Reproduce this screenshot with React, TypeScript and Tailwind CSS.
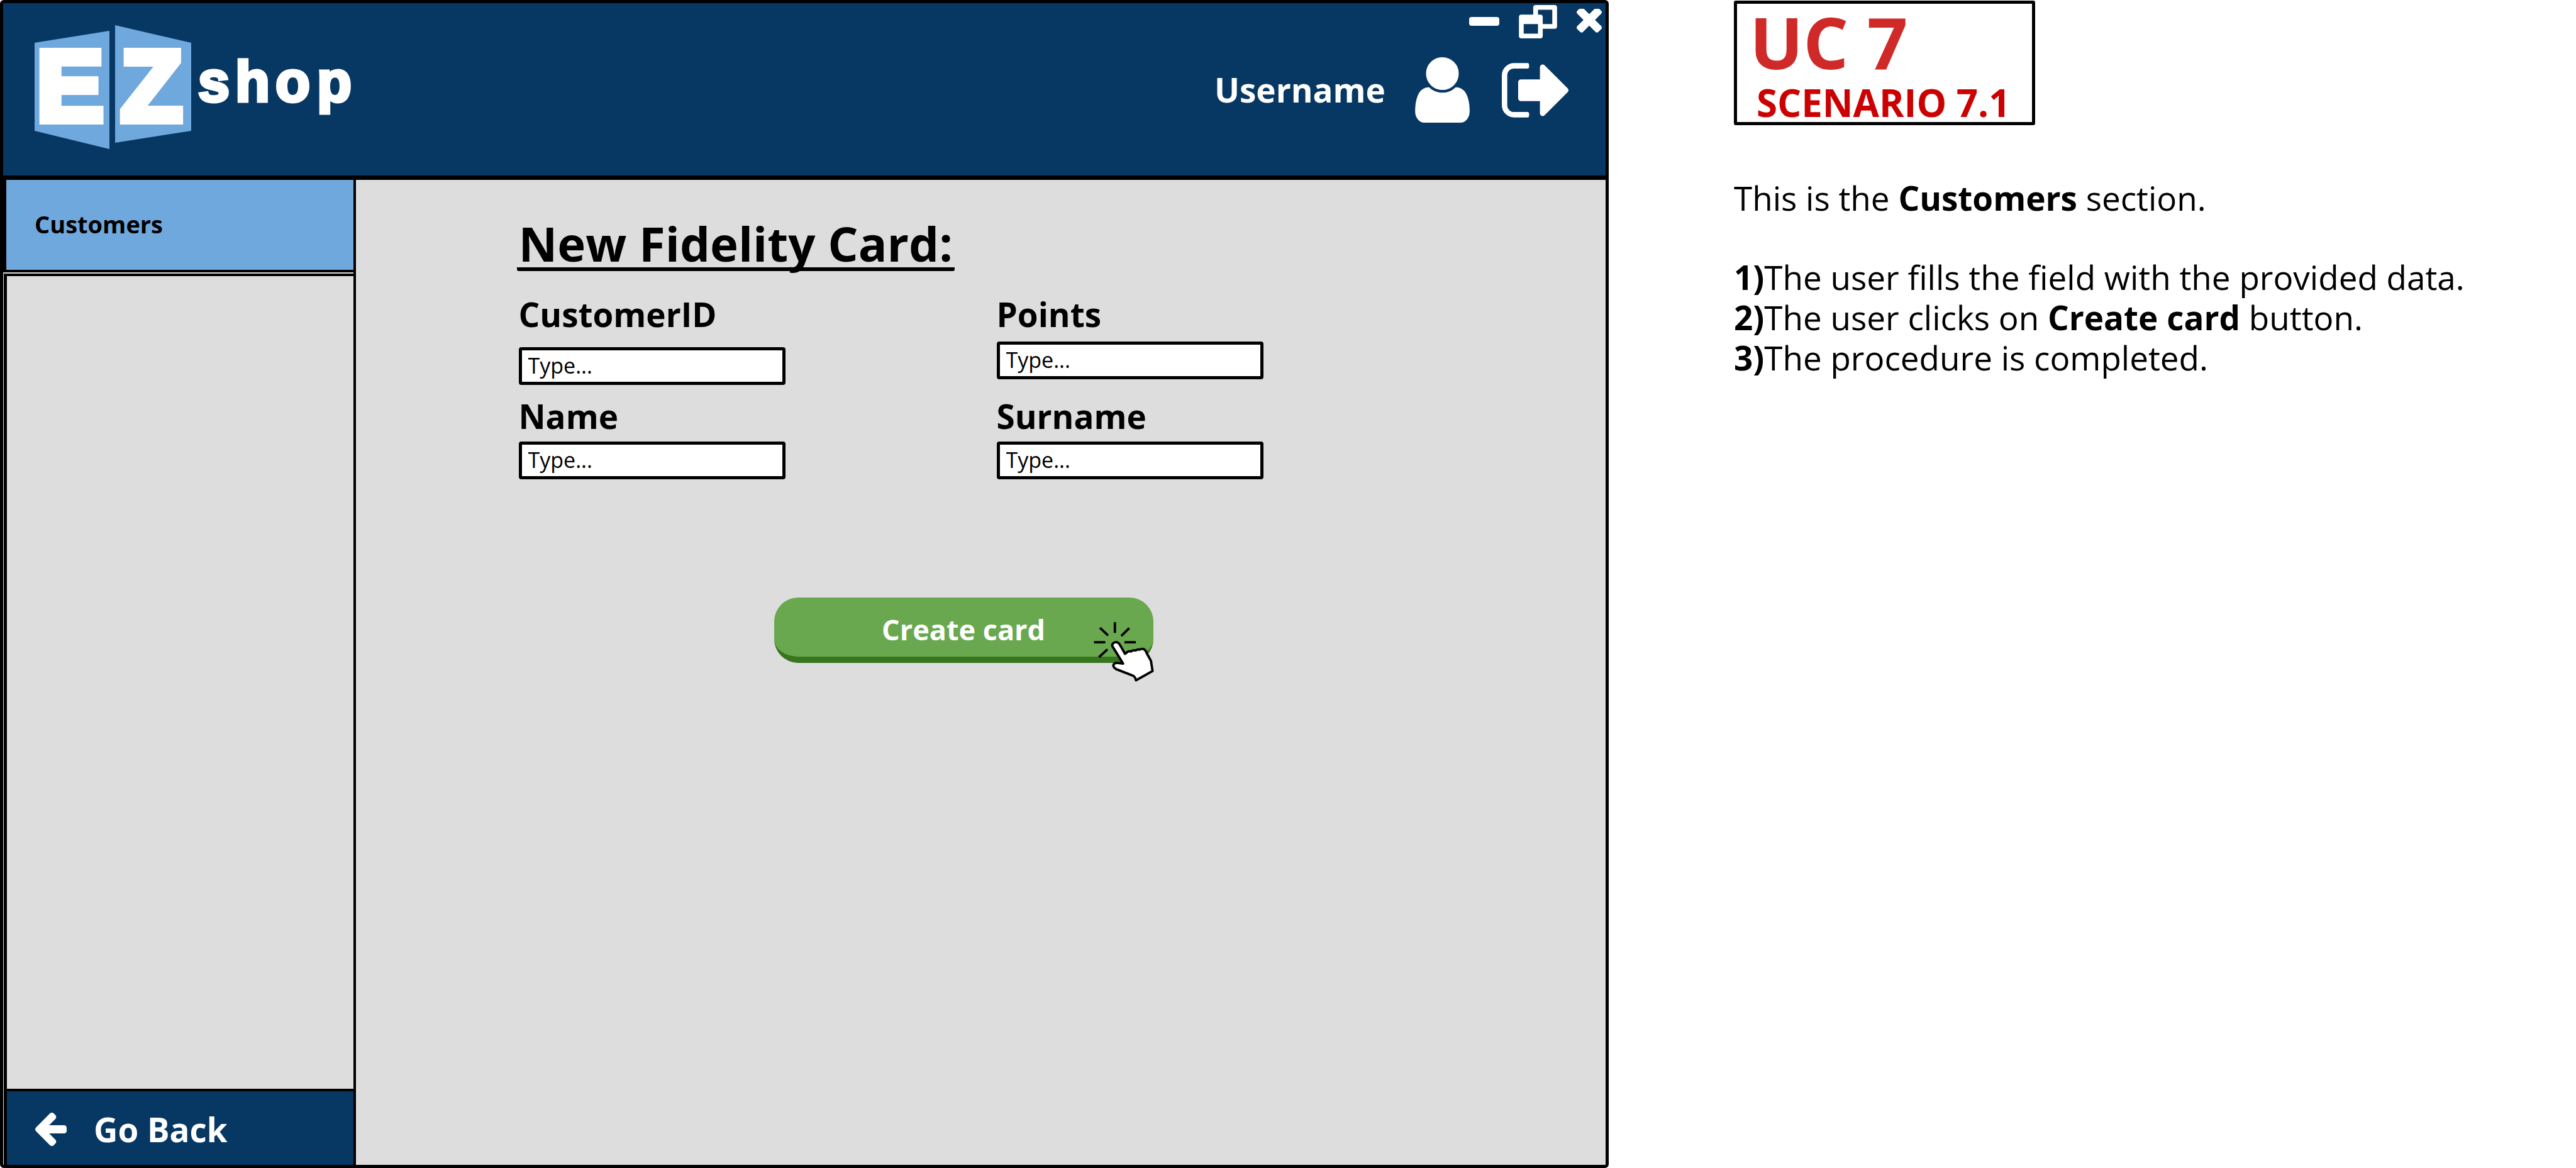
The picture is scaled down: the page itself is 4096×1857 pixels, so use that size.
function LogoMark() {
  return (
    <svg viewBox="0 0 520 200" className="block h-[200px] w-[520px]" role="img" aria-label="EZ shop">
      <polygon points="0,30 119,11 119,199 0,170" fill="#6fa8dc" />
      <polygon points="128,2 249,30 249,170 128,189" fill="#6fa8dc" />
      <g fill="#fff" stroke="#fff" fontFamily="'Liberation Sans', Arial, sans-serif" fontWeight="700">
        <text x="3 137" y="154" fontSize="160" strokeWidth="12">EZ</text>
        <text x="260 319 383 449" y="123" fontSize="90" strokeWidth="5">shop</text>
      </g>
    </svg>
  );
}

function UserIcon() {
  return (
    <svg viewBox="0 128 1280 1536" className="h-[104px] w-[87px]" fill="currentColor" aria-hidden="true">
      <path d="M1280 1399q0 109-62.5 187t-150.5 78h-854q-88 0-150.5-78t-62.5-187q0-85 8.5-160.5t31.5-152 58.5-131 94-89 134.5-34.5q131 128 313 128t313-128q76 0 134.5 34.5t94 89 58.5 131 31.5 152 8.5 160.5zm-256-887q0 159-112.5 271.5t-271.5 112.5-271.5-112.5-112.5-271.5 112.5-271.5 271.5-112.5 271.5 112.5 112.5 271.5z" />
    </svg>
  );
}

function SignOutIcon() {
  return (
    <svg viewBox="0 256 1568 1280" className="h-[87px] w-[106px]" fill="currentColor" aria-hidden="true">
      <path d="M640 1440q0 4 1 20t.5 26.5-3 23.5-10 19.5-20.5 6.5h-320q-119 0-203.5-84.5t-84.5-203.5v-704q0-119 84.5-203.5t203.5-84.5h320q13 0 22.5 9.5t9.5 22.5q0 4 1 20t.5 26.5-3 23.5-10 19.5-20.5 6.5h-320q-66 0-113 47t-47 113v704q0 66 47 113t113 47h312l11.5 1 11.5 3 8 5.5 7 9 2 13.5zm928-544q0 26-19 45l-544 544q-19 19-45 19t-45-19-19-45v-288h-448q-26 0-45-19t-19-45v-384q0-26 19-45t45-19h448v-288q0-26 19-45t45-19 45 19l544 544q19 19 19 45z" />
    </svg>
  );
}

function MinimizeIcon() {
  return (
    <svg viewBox="0 0 48 14" className="h-[14px] w-[48px]" fill="currentColor" aria-hidden="true">
      <rect width="48" height="14" rx="4" />
    </svg>
  );
}

function RestoreIcon() {
  return (
    <svg viewBox="0 0 64 56" className="h-[53px] w-[61px]" fill="currentColor" aria-hidden="true">
      <path
        fillRule="evenodd"
        d="M4 16H24V4Q24 0 28 0H60Q64 0 64 4V36Q64 40 60 40H40V52Q40 56 36 56H4Q0 56 0 52V20Q0 16 4 16ZM32 8V16H36Q40 16 40 20V32H56V8ZM8 32V48H32V32Z"
      />
    </svg>
  );
}

function CloseIcon() {
  return (
    <svg viewBox="110 434 1188 1188" className="h-[40px] w-[40px]" fill="currentColor" aria-hidden="true">
      <path d="M1298 1322q0 40-28 68l-136 136q-28 28-68 28t-68-28l-294-294-294 294q-28 28-68 28t-68-28l-136-136q-28-28-28-68t28-68l294-294-294-294q-28-28-28-68t28-68l136-136q28-28 68-28t68 28l294 294 294-294q28-28 68-28t68 28l136 136q28 28 28 68t-28 68l-294 294 294 294q28 28 28 68z" />
    </svg>
  );
}

function BackArrowIcon() {
  return (
    <svg viewBox="64 181 1472 1558" className="h-[53px] w-[50px]" fill="currentColor" aria-hidden="true">
      <path d="M1536 896v128q0 53-32.5 90.5t-84.5 37.5h-704l293 294q38 36 38 90t-38 90l-75 76q-37 37-90 37-52 0-91-37l-651-652q-37-37-37-90 0-52 37-91l651-650q38-38 91-38 52 0 90 38l75 74q38 38 38 91t-38 91l-293 293h704q52 0 84.5 37.5t32.5 90.5z" />
    </svg>
  );
}

function ClickCursor() {
  return (
    <svg
      viewBox="0 0 360 360"
      className="pointer-events-none absolute top-6 -right-[10px] h-[114px] w-[114px]"
      fill="none"
      stroke="#000"
      strokeWidth="12"
      aria-hidden="true"
    >
      <path d="M135 48V102M60 76L101 115M207 78L167 117M30 149H87M183 149H240M98 184L55 224" />
      <path
        fill="#fff"
        strokeLinejoin="round"
        d="M122 168Q121 149 141 148Q153 148 161 163L186 207L196 199Q206 191 216 195Q226 187 240 190Q248 183 258 186Q270 179 282 184Q292 192 296 206L316 242L324 293L241 340Q236 320 224 316L142 284Q124 272 128 262Q134 250 152 253L176 256Z"
      />
    </svg>
  );
}

type FieldProps = { id: string; label: string; gap: string };

function Field({ id, label, gap }: FieldProps) {
  return (
    <div className={"flex flex-col " + gap}>
      <label htmlFor={id} className="text-[53px] leading-[64px] font-bold">
        {label}
      </label>
      <input
        id={id}
        type="text"
        placeholder="Type..."
        className="h-[60px] w-[424px] rounded-[4px] border-[5px] border-black bg-white px-[10px] pb-[3px] text-[34px] placeholder:text-black placeholder:opacity-100"
      />
    </div>
  );
}

export default function App() {
  return (
    <div className="flex min-h-screen bg-white font-['Open_Sans','Noto_Sans',sans-serif] text-black">
      <div className="flex w-[62.45%] flex-col rounded-[6px] border-[5px] border-black bg-[#dddddd]">
        <header className="flex h-[281px] justify-between border-b-[7px] border-black bg-[#073763] text-white">
          <div className="pt-[33px] pl-[50px]">
            <LogoMark />
          </div>
          <div className="flex flex-col items-end">
            <div className="flex h-[56px] items-center gap-[31px] pt-[2px] pr-[6px]">
              <button type="button" aria-label="Minimize"><MinimizeIcon /></button>
              <button type="button" aria-label="Restore"><RestoreIcon /></button>
              <button type="button" aria-label="Close"><CloseIcon /></button>
            </div>
            <div className="flex h-[164px] items-center pr-[59px]">
              <span className="text-[53px] leading-[64px] font-bold">Username</span>
              <span className="ml-[47px]"><UserIcon /></span>
              <button type="button" aria-label="Sign out" className="ml-[51px]"><SignOutIcon /></button>
            </div>
          </div>
        </header>
        <div className="flex grow">
          <aside className="flex w-[22%] flex-col border-r-[4px] border-black">
            <a href="#customers" className="flex h-[147px] items-center border-b-[4px] border-l-[5px] border-black bg-[#6fa8dc] pb-[2px] pl-[45px] text-[38px] font-bold">
              Customers
            </a>
            <div className="mt-[2px] ml-[1px] grow border-t-[4px] border-l-[5px] border-black" />
            <button type="button" className="ml-[1px] flex h-[121px] items-center gap-[43px] border-t-[4px] border-l-[5px] border-black bg-[#073763] pt-1 pl-[45px] text-[53px] font-bold text-white">
              <BackArrowIcon />
              Go Back
            </button>
          </aside>
          <main className="grow pt-[63px] pl-[256px]">
            <h1 className="w-fit rounded-[3px] border-b-[6px] border-black px-[3px] text-[76px] leading-[76px] font-bold">
              New Fidelity Card:
            </h1>
            <form className="ml-[3px] w-[1184px]">
              <div className="mt-[37px] flex justify-between">
                <Field id="customer-id" label="CustomerID" gap="gap-5" />
                <Field id="points" label="Points" gap="gap-[11px]" />
              </div>
              <div className="mt-[18px] flex justify-between">
                <Field id="name" label="Name" gap="gap-2" />
                <Field id="surname" label="Surname" gap="gap-2" />
              </div>
              <button
                type="button"
                className="relative mt-[188px] ml-[406px] flex h-[104px] w-[603px] items-center justify-center rounded-[38px] border-b-[10px] border-[#38761d] bg-[#6aa84f] pt-2 text-[45px] font-bold text-white"
              >
                Create card
                <ClickCursor />
              </button>
            </form>
          </main>
        </div>
      </div>
      <section className="ml-[199px] grow">
        <div className="mt-[1px] w-[479px] rounded-[3px] border-[5px] border-black font-bold">
          <p className="pl-5 text-[113px] leading-[120px] text-[#cf2a27]">UC 7</p>
          <p className="mt-[6px] pl-[31px] text-[60px] leading-[62px] text-[#cc0000]">SCENARIO 7.1</p>
        </div>
        <div className="mt-[84px] text-[53px] leading-[64px]">
          <p>This is the <b>Customers</b> section.</p>
          <ol className="mt-[62px]">
            <li><b>1)</b>The user fills the field with the provided data.</li>
            <li><b>2)</b>The user clicks on <b>Create card</b> button.</li>
            <li><b>3)</b>The procedure is completed.</li>
          </ol>
        </div>
      </section>
    </div>
  );
}
